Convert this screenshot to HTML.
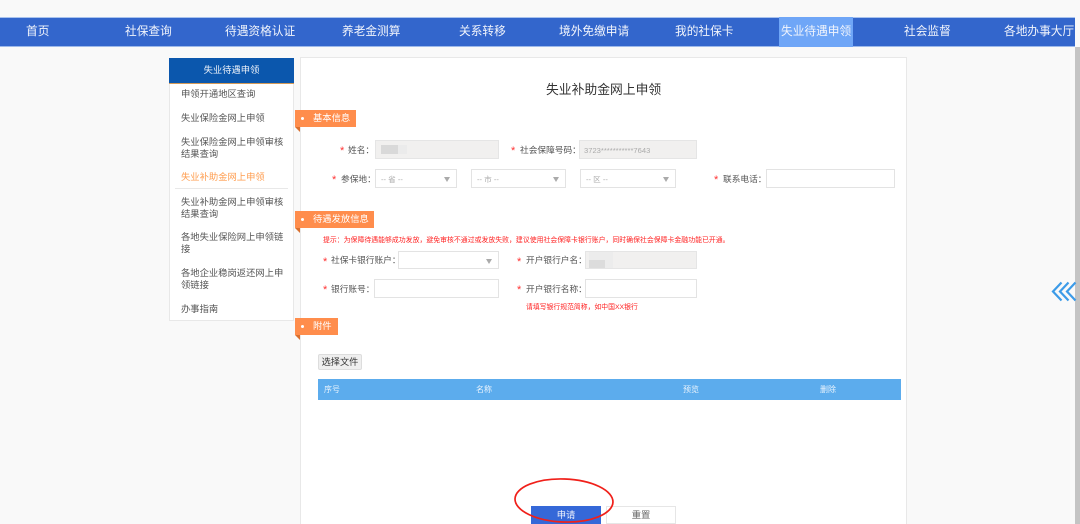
<!DOCTYPE html>
<html lang="zh"><head><meta charset="utf-8"><title>失业补助金网上申领</title>
<style>
html,body{margin:0;padding:0;width:1080px;height:524px;overflow:hidden;background:#f9f9f9}
body{position:relative;font-family:"Liberation Sans","Noto Sans CJK SC",sans-serif;color:#555}
#w{left:0;top:0;width:1080px;height:524px;filter:blur(.3px)}
div,span{position:absolute;box-sizing:border-box;white-space:nowrap}
.nav{left:0;top:17px;width:1075px;height:30px;background:#3366cc;border-top:1px solid #a9c3ee;border-bottom:1px solid #9db9ea}
.n{top:24px;height:16px;line-height:16px;font-size:11.7px;color:#f2f5fc;text-align:center}
.s{left:181px;font-size:9.3px;line-height:12px;color:#555}
.tag{left:295px;height:17px;background:#ff8d4c;color:#fff;font-size:9.3px;line-height:17px;padding-left:18px}
.tag:before{content:"";position:absolute;left:6px;top:7px;width:3px;height:3px;border-radius:50%;background:#fff}
.tag:after{content:"";position:absolute;left:0;top:17px;border-top:5px solid #d9702f;border-left:5px solid transparent}
.l{font-size:8.7px;line-height:12px;color:#555}
.r{font-size:11px;line-height:10px;color:#f33}
.i{background:#fff;border:1px solid #e3e3e3}
.d{background:#f1f0ef;border:1px solid #e5e5e5}
.i i{position:absolute;right:6px;top:7px;width:0;height:0;border-top:5px solid #aaa;border-left:3.5px solid transparent;border-right:3.5px solid transparent}
.p{left:5px;top:5px;font-size:7.6px;line-height:9px;color:#aaa}
.h{top:385px;font-size:8px;line-height:10px;color:#eaf4fd}
</style></head><body><div id="w">
<div class="nav"></div>
<div style="left:779px;top:17px;width:74px;height:30px;background:#6fa6f7"></div>
<div class="n" style="left:26px">首页</div>
<div class="n" style="left:125px">社保查询</div>
<div class="n" style="left:225px">待遇资格认证</div>
<div class="n" style="left:342px">养老金测算</div>
<div class="n" style="left:459px">关系转移</div>
<div class="n" style="left:559px">境外免缴申请</div>
<div class="n" style="left:675px">我的社保卡</div>
<div class="n" style="left:781px">失业待遇申领</div>
<div class="n" style="left:904px">社会监督</div>
<div class="n" style="left:1004px">各地办事大厅</div>
<div style="left:1075px;top:47px;width:5px;height:477px;background:#c4c4c4"></div>

<div style="left:169px;top:59px;width:125px;height:262px;background:#fff;border:1px solid #e8e8e8"></div>
<div style="left:169px;top:58px;width:125px;height:26px;background:#0b57ad;border-bottom:1px solid #d39a58;color:#eef3fa;font-size:9.3px;line-height:25px;text-align:center">失业待遇申领</div>
<div class="s" style="top:88px">申领开通地区查询</div>
<div class="s" style="top:112px">失业保险金网上申领</div>
<div class="s" style="top:136px">失业保险金网上申领审核<br>结果查询</div>
<div class="s" style="top:171px;color:#ff9d4f">失业补助金网上申领</div>
<div style="left:175px;top:188px;width:113px;height:1px;background:#e8e8e8"></div>
<div class="s" style="top:196px">失业补助金网上申领审核<br>结果查询</div>
<div class="s" style="top:231px">各地失业保险网上申领链<br>接</div>
<div class="s" style="top:267px">各地企业稳岗返还网上申<br>领链接</div>
<div class="s" style="top:303px">办事指南</div>

<div style="left:300px;top:57px;width:607px;height:480px;background:#fff;border:1px solid #e8e8e8"></div>
<div style="left:546px;top:81px;font-size:12.8px;line-height:17px;color:#333">失业补助金网上申领</div>

<div class="tag" style="top:110px;width:61px">基本信息</div>
<div class="tag" style="top:211px;width:79px">待遇发放信息</div>
<div class="tag" style="top:318px;width:43px">附件</div>

<div class="r" style="left:340px;top:146px">*</div><div class="l" style="left:348px;top:144px">姓名：</div>
<div class="d" style="left:375px;top:140px;width:124px;height:19px"></div>
<div style="left:381px;top:145px;width:17px;height:9px;background:#d9d9d9"></div>
<div style="left:398px;top:145px;width:9px;height:9px;background:#ebebeb"></div>
<div class="r" style="left:511px;top:146px">*</div><div class="l" style="left:520px;top:144px">社会保障号码：</div>
<div class="d" style="left:579px;top:140px;width:118px;height:19px"><span class="p" style="left:4px">3723***********7643</span></div>

<div class="r" style="left:332px;top:175px">*</div><div class="l" style="left:341px;top:173px">参保地：</div>
<div class="i" style="left:375px;top:169px;width:82px;height:19px"><span class="p">-- 省 --</span><i></i></div>
<div class="i" style="left:471px;top:169px;width:95px;height:19px"><span class="p">-- 市 --</span><i></i></div>
<div class="i" style="left:580px;top:169px;width:96px;height:19px"><span class="p">-- 区 --</span><i></i></div>
<div class="r" style="left:714px;top:175px">*</div><div class="l" style="left:723px;top:173px">联系电话：</div>
<div class="i" style="left:766px;top:169px;width:129px;height:19px"></div>

<div style="left:323px;top:236px;font-size:6.9px;line-height:10px;color:#f22">提示：为保障待遇能够成功发放，避免审核不通过或发放失败，建议使用社会保障卡银行账户，同时确保社会保障卡金融功能已开通。</div>

<div class="r" style="left:323px;top:257px">*</div><div class="l" style="left:331px;top:254px">社保卡银行账户：</div>
<div class="i" style="left:398px;top:251px;width:101px;height:18px"><i></i></div>
<div class="r" style="left:517px;top:257px">*</div><div class="l" style="left:526px;top:254px">开户银行户名：</div>
<div class="d" style="left:585px;top:251px;width:112px;height:18px"></div>
<div style="left:589px;top:252px;width:24px;height:16px;background:#ececec"></div>
<div style="left:589px;top:260px;width:16px;height:8px;background:#dcdcdc"></div>

<div class="r" style="left:323px;top:285px">*</div><div class="l" style="left:331px;top:283px">银行账号：</div>
<div class="i" style="left:374px;top:279px;width:125px;height:19px"></div>
<div class="r" style="left:517px;top:285px">*</div><div class="l" style="left:526px;top:283px">开户银行名称：</div>
<div class="i" style="left:585px;top:279px;width:112px;height:19px"></div>
<div style="left:526px;top:303px;font-size:6.85px;line-height:10px;color:#f22">请填写银行规范简称，如中国XX银行</div>

<div style="left:318px;top:354px;width:44px;height:16px;background:#efefef;border:1px solid #ddd;border-radius:2px;font-size:9.2px;line-height:14px;text-align:center;color:#333">选择文件</div>
<div style="left:318px;top:379px;width:583px;height:21px;background:#5caced"></div>
<div class="h" style="left:324px">序号</div>
<div class="h" style="left:476px">名称</div>
<div class="h" style="left:683px">预览</div>
<div class="h" style="left:820px">删除</div>

<div style="left:531px;top:506px;width:70px;height:18px;background:#3568d8;color:#f2f5fc;font-size:9.3px;line-height:18px;text-align:center">申请</div>
<div style="left:606px;top:506px;width:70px;height:18px;background:#fff;border:1px solid #e6e6e6;color:#666;font-size:9.3px;line-height:16px;text-align:center">重置</div>

<svg style="position:absolute;left:0;top:0" width="1080" height="524" viewBox="0 0 1080 524" fill="none">
<ellipse cx="564" cy="500.500" rx="49" ry="21.500" stroke="#f0201a" stroke-width="1.700" transform="rotate(2 564 500)"/>
<path d="M1061.500 282.500l-8.500 9 8.500 9M1068.500 282.500l-8.500 9 8.500 9M1075.500 282.500l-8.500 9 8.500 9" stroke="#3c9be8" stroke-width="2.200"/>
</svg>
</div></body></html>
